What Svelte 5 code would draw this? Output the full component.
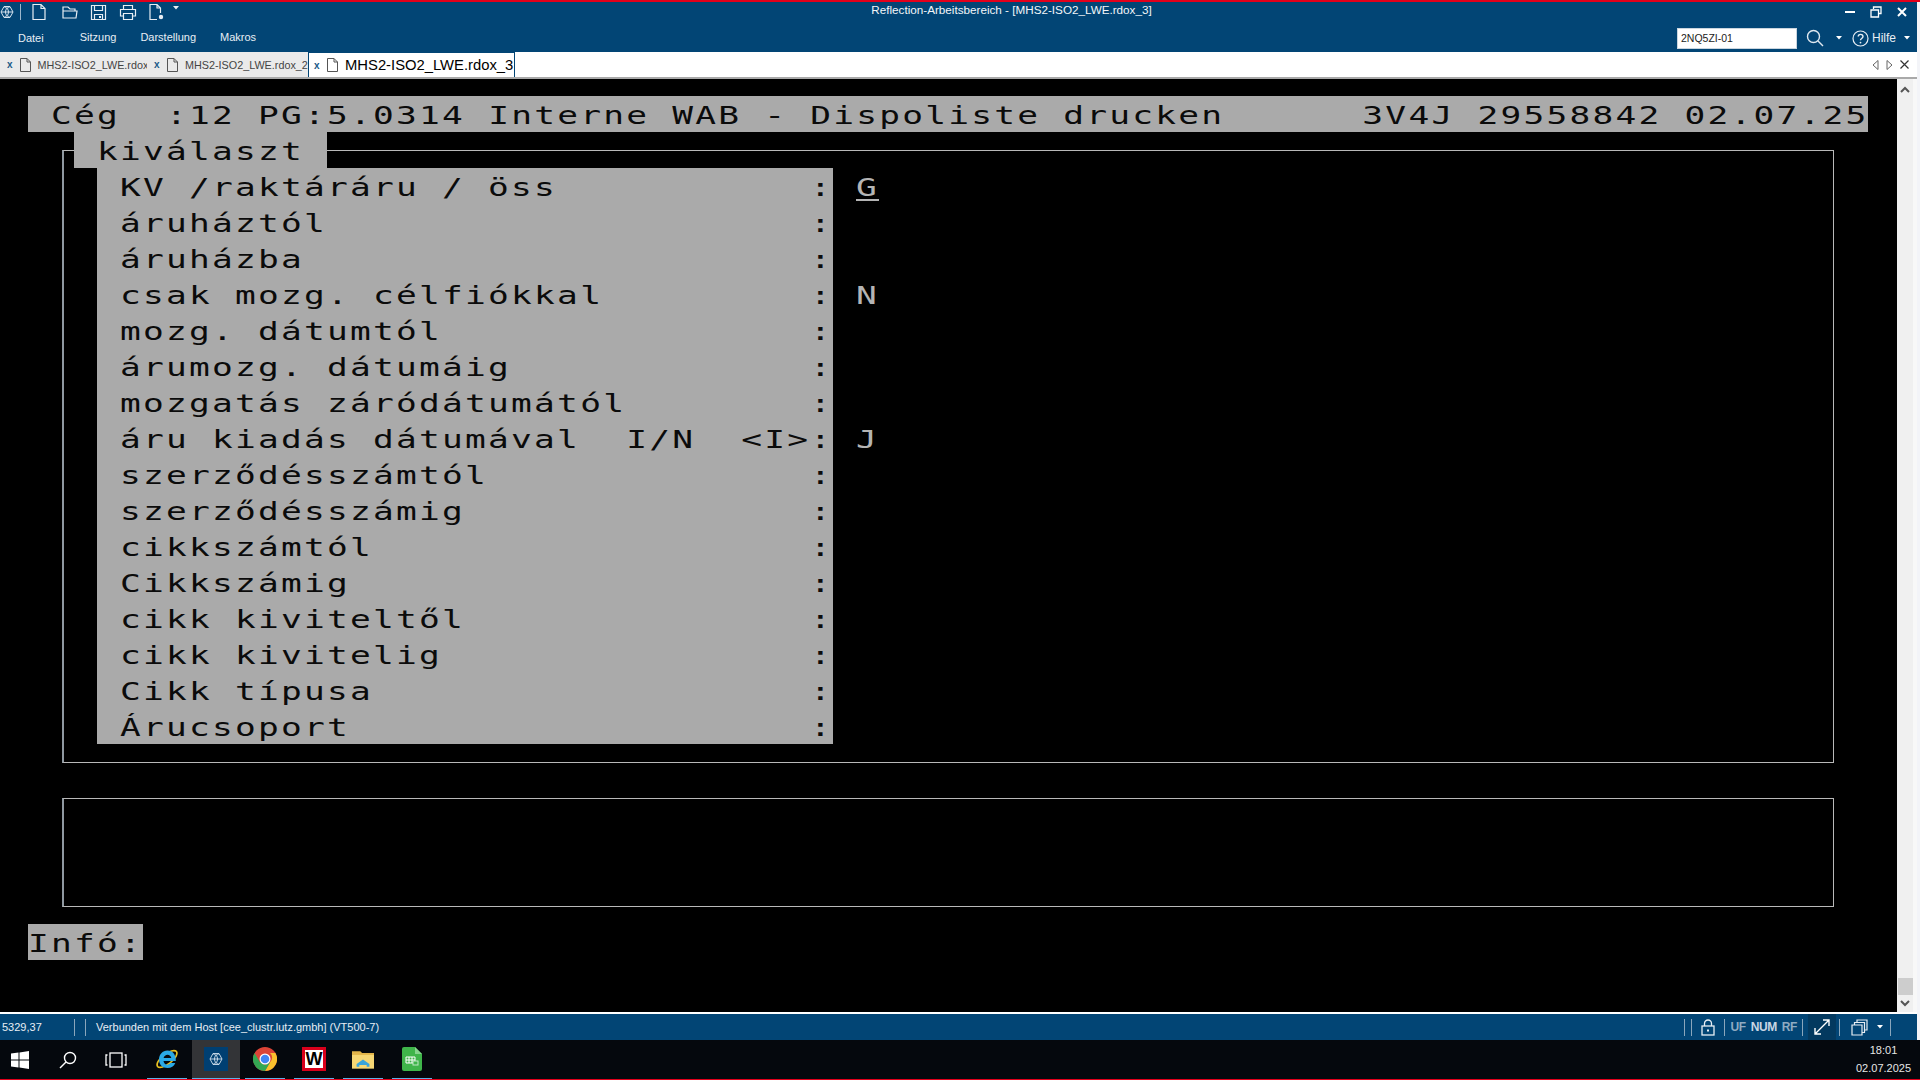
<script>
  const fields = [
    ['KV /raktáráru / öss', 'G'],
    ['áruháztól', ''],
    ['áruházba', ''],
    ['csak mozg. célfiókkal', 'N'],
    ['mozg. dátumtól', ''],
    ['árumozg. dátumáig', ''],
    ['mozgatás záródátumától', ''],
    ['áru kiadás dátumával  I/N  <I>', 'J'],
    ['szerződésszámtól', ''],
    ['szerződésszámig', ''],
    ['cikkszámtól', ''],
    ['Cikkszámig', ''],
    ['cikk kiviteltől', ''],
    ['cikk kivitelig', ''],
    ['Cikk típusa', ''],
    ['Árucsoport', '']
  ];
  const tabs = [
    { name: 'MHS2-ISO2_LWE.rdox', active: false },
    { name: 'MHS2-ISO2_LWE.rdox_2', active: false },
    { name: 'MHS2-ISO2_LWE.rdox_3', active: true }
  ];
  const head = ' Cég  :12 PG:5.0314 Interne WAB - Dispoliste drucken      3V4J 29558842 02.07.25';
</script>

<div class="screen">
  <div class="redline"></div>
  <div class="window">
    <header class="ribbon">
      <div class="titlerow">
        <div class="quick">
          <svg class="logo" width="14" height="14" viewBox="0 0 14 14" fill="none" stroke="#d5e2ee" stroke-width="1"><path d="M4 1.500h6L13 7l-3 5.500H4L1 7zM1 7h12M4 1.500c2 2 4 2 6 0M4 12.500c2-2 4-2 6 0M7 3.200c-2 2-2 5.600 0 7.600M7 3.200c2 2 2 5.600 0 7.600"/></svg>
          <span class="vsep"></span>
          <svg width="16" height="18" viewBox="0 0 16 18" fill="none" stroke="#e8eef4" stroke-width="1.2"><path d="M2 1.500h8l4 4v11H2zM10 1.500v4h4"/></svg>
          <svg width="18" height="16" viewBox="0 0 18 16" fill="none" stroke="#e8eef4" stroke-width="1.2"><path d="M2 14V3h5l2 2h5v2M2 7h14l-1 7H2z"/></svg>
          <svg width="17" height="17" viewBox="0 0 17 17" fill="none" stroke="#e8eef4" stroke-width="1.2"><path d="M1.500 1.500h14v14h-14zM4.500 1.500v5h8v-5M4.500 15.500v-5h8v5"/><rect x="9" y="12" width="2" height="2" fill="#e8eef4" stroke="none"/></svg>
          <svg width="18" height="17" viewBox="0 0 18 17" fill="none" stroke="#e8eef4" stroke-width="1.2"><path d="M4.500 5V1.500h9V5M4.500 12H1.500V5.500h15V12h-3M4.500 9.500h9v6h-9z"/></svg>
          <svg width="18" height="18" viewBox="0 0 18 18" fill="none" stroke="#e8eef4" stroke-width="1.2"><path d="M9 16.500H2v-15h7l3.500 3.500v5M9 1.500V5h3.500"/><circle cx="13" cy="14" r="2.200" fill="#e8eef4" stroke="none"/></svg>
          <svg class="caret" width="6" height="4" viewBox="0 0 6 4"><path d="M0 0h6L3 3.500z" fill="#e8eef4"/></svg>
        </div>
        <div class="title">Reflection-Arbeitsbereich - [MHS2-ISO2_LWE.rdox_3]</div>
        <div class="winctl">
          <svg width="10" height="3" viewBox="0 0 10 3"><rect width="10" height="2" fill="#fff"/></svg>
          <svg width="12" height="12" viewBox="0 0 12 12" fill="none" stroke="#fff" stroke-width="1.3"><path d="M3.500 3V1h7.500v6.500H8.500M1 4h7.500v7H1z"/></svg>
          <svg width="10" height="10" viewBox="0 0 10 10" stroke="#fff" stroke-width="2"><path d="M1 1l8 8M9 1l-8 8"/></svg>
        </div>
      </div>
      <div class="menurow">
        <nav class="menu">
          <span class="file">Datei</span>
          <span>Sitzung</span>
          <span>Darstellung</span>
          <span>Makros</span>
        </nav>
        <div class="tools">
          <div class="search">2NQ5ZI-01</div>
          <svg class="magn" width="18" height="18" viewBox="0 0 18 18" fill="none" stroke="#dfe8f0" stroke-width="1.4"><circle cx="7.500" cy="7.500" r="6"/><path d="M12 12l5 5"/></svg>
          <svg class="caret1" width="6" height="4" viewBox="0 0 6 4"><path d="M0 0h6L3 3.500z" fill="#fff"/></svg>
          <svg class="help" width="17" height="17" viewBox="0 0 17 17" fill="none" stroke="#e8eef4" stroke-width="1.2"><circle cx="8.500" cy="8.500" r="7.500"/><path d="M6.200 6.600c0-3 4.800-3 4.800 0 0 1.900-2.500 1.800-2.500 3.600" stroke-width="1.400"/><circle cx="8.500" cy="12.600" r="0.900" fill="#e8eef4" stroke="none"/></svg>
          <span class="hilfe">Hilfe</span>
          <svg class="caret2" width="6" height="4" viewBox="0 0 6 4"><path d="M0 0h6L3 3.500z" fill="#fff"/></svg>
        </div>
      </div>
    </header>

    <div class="tabstrip">
      {#each tabs as t}
        <div class="tab" class:active={t.active}>
          <span class="x">x</span>
          <svg width="13" height="16" viewBox="0 0 13 16" fill="none" stroke="#555" stroke-width="1"><path d="M1.500 1.500h6.500l3.500 3.500v9.500h-10zM8 1.500V5h3.500"/></svg>
          <span class="tname">{t.name}</span>
        </div>
      {/each}
      <div class="tabnav">
        <svg width="7" height="10" viewBox="0 0 7 10" fill="none" stroke="#666"><path d="M6 .5v9L1 5z"/></svg>
        <svg width="7" height="10" viewBox="0 0 7 10" fill="none" stroke="#666"><path d="M1 .5v9L6 5z"/></svg>
        <svg width="9" height="9" viewBox="0 0 9 9" stroke="#333" stroke-width="1.200"><path d="M.5.5l8 8M8.500.5l-8 8"/></svg>
      </div>
    </div>

    <main class="workarea">
      <div class="terminal">
        <div class="box box1"></div>
        <div class="box box2"></div>
        <div class="cell headrow"><span class="t">{head}</span></div>
        <div class="cell legend"><span class="t">kiválaszt</span></div>
        <div class="panel">
          {#each fields as f}
            <div class="frow">
              <span class="t lbl">{f[0]}</span>
              <span class="t colon">:</span>
            </div>
          {/each}
        </div>
        <div class="values">
          {#each fields as f}
            <div class="vrow"><span class="t" class:ul={f[1] === 'G'}>{f[1]}</span></div>
          {/each}
        </div>
        <div class="cell info"><span class="t">Infó:</span></div>
      </div>
      <aside class="scroll">
        <svg width="12" height="8" viewBox="0 0 12 8" fill="none" stroke="#555" stroke-width="2"><path d="M2 6l4-4 4 4"/></svg>
        <div class="thumbwrap">
          <div class="thumb"></div>
          <svg width="12" height="8" viewBox="0 0 12 8" fill="none" stroke="#555" stroke-width="2"><path d="M2 2l4 4 4-4"/></svg>
        </div>
      </aside>
    </main>

    <footer class="status">
      <span class="coord">5329,37</span>
      <span class="sbar s1"></span><span class="sbar s2"></span>
      <span class="conn">Verbunden mit dem Host [cee_clustr.lutz.gmbh] (VT500-7)</span>
      <div class="sright">
        <span class="sbar"></span><span class="sbar"></span>
        <svg class="lock" width="14" height="17" viewBox="0 0 14 17" fill="none" stroke="#e8eef4" stroke-width="1.300"><rect x="1" y="7" width="12" height="9"/><path d="M3.500 7V4.500a3.500 3.500 0 0 1 7 0V7"/><rect x="6" y="10.500" width="2" height="2" fill="#e8eef4" stroke="none"/></svg>
        <span class="sbar"></span>
        <span class="flag dim">UF</span><span class="flag">NUM</span><span class="flag dim">RF</span>
        <span class="sbar"></span>
        <div class="expand"><svg width="18" height="18" viewBox="0 0 18 18" fill="none" stroke="#fff" stroke-width="1.400"><path d="M2 16L16 2M10 2h6v6M2 10v6h6"/></svg></div>
        <span class="sbar"></span>
        <svg class="wins" width="17" height="17" viewBox="0 0 17 17" fill="none" stroke="#e8eef4" stroke-width="1.200"><path d="M1 6h10v10H1zM3.500 6V3.500h10v10H11M6 3.500V1h10v10h-2.500"/></svg>
        <svg class="sc" width="6" height="4" viewBox="0 0 6 4"><path d="M0 0h6L3 3.500z" fill="#fff"/></svg>
        <span class="sbar last"></span>
      </div>
    </footer>
  </div>

  <div class="taskbar">
    <div class="apps">
      <div class="slot plain w48"><svg width="18" height="18" viewBox="0 0 18 18" fill="#fff"><path d="M0 2.500L7.500 1.500V8.500H0zM8.500 1.400L18 0V8.500H8.500zM0 9.500H7.500V16.500L0 15.500zM8.500 9.500H18V18L8.500 16.600z"/></svg></div>
      <div class="slot plain w48"><svg width="18" height="18" viewBox="0 0 18 18" fill="none" stroke="#fff" stroke-width="1.400"><circle cx="11" cy="7" r="5.500"/><path d="M7 11l-6 6"/></svg></div>
      <div class="slot plain w48"><svg width="22" height="16" viewBox="0 0 22 16" fill="none" stroke="#fff" stroke-width="1.300"><rect x="5" y="1" width="12" height="14"/><path d="M2.500 3H1v10h1.500M19.500 3H21v10h-1.500"/></svg></div>
      <div class="slot on ie"><svg width="24" height="24" viewBox="0 0 24 24"><ellipse cx="12" cy="12" rx="12" ry="5" transform="rotate(-38 12 12)" fill="none" stroke="#e8c020" stroke-width="1.600"/><path d="M12.500 3.500C7.500 3.500 4 7.500 4 12.500S7.500 21 12.500 21c3.700 0 6.500-1.800 7.800-5h-5c-.6 1.100-1.700 1.700-2.900 1.700-2 0-3.600-1.400-3.900-3.700h12.300c.2-6.500-3.300-10.500-8.300-10.500zM8.600 11c.4-2 2-3.300 3.900-3.300S16 9 16.300 11z" fill="#2aa9e6"/></svg></div>
      <div class="slot on act"><span class="square"><svg width="16" height="14" viewBox="0 0 14 14" fill="none" stroke="#d5e2ee" stroke-width="0.900"><path d="M4 1.500h6L13 7l-3 5.500H4L1 7zM1 7h12M4 1.500c2 2 4 2 6 0M4 12.500c2-2 4-2 6 0M7 3.200c-2 2-2 5.600 0 7.600M7 3.200c2 2 2 5.600 0 7.600"/></svg></span></div>
      <div class="slot on"><svg width="24" height="24" viewBox="0 0 24 24"><circle cx="12" cy="12" r="12" fill="#db4437"/><path d="M12 6h10.400A12 12 0 0 1 12 24l5.200-9a6 6 0 0 0-.2-9z" fill="#fbc02d"/><path d="M1.600 6A12 12 0 0 0 12 24l5.200-9-5.200 3-5.200-3z" fill="#34a853"/><circle cx="12" cy="12" r="5.500" fill="#fff"/><circle cx="12" cy="12" r="4.300" fill="#4285f4"/></svg></div>
      <div class="slot on"><span class="wps">W</span></div>
      <div class="slot on"><svg width="22" height="19" viewBox="0 0 24 20"><path d="M0 1h9l2 2h13v4H0z" fill="#e3b54a"/><path d="M0 5h24v15H0z" fill="#f7d774"/><path d="M5 18v-3l7-5 7 5v3h-3v-2H8v2z" fill="#3aa5dc"/></svg></div>
      <div class="slot on"><svg width="20" height="24" viewBox="0 0 20 24"><path d="M2 0h11l7 7v15a2 2 0 0 1-2 2H2a2 2 0 0 1-2-2V2a2 2 0 0 1 2-2z" fill="#3fb54a"/><path d="M13 0l7 7h-7z" fill="#86d48d"/><path d="M4 10h9v6H4zM4 13h9M7 10v6M10 10v6" fill="none" stroke="#fff"/><rect x="11" y="14" width="5" height="4" fill="#3fb54a" stroke="#bfe8c3"/></svg></div>
    </div>
    <div class="clock"><span>18:01</span><span>02.07.2025</span></div>
  </div>
</div>

<style>
  :global(body) { margin: 0; background: #000; overflow: hidden; }
  .screen { width: 1920px; height: 1080px; display: flex; flex-direction: column; font-family: "Liberation Sans", Arial, sans-serif; overflow: hidden; }
  svg { display: block; flex: none; }
  .redline { height: 2px; flex: none; background: #e3001b; }
  .window { flex: none; height: 1038px; display: flex; flex-direction: column; border-right: 3px solid #f3f4f8; }

  .ribbon { height: 50px; flex: none; background: #024575; color: #e8eef4; font-size: 11px; }
  .titlerow { height: 20px; display: flex; align-items: center; position: relative; }
  .quick { display: flex; align-items: center; }
  .logo { margin-right: 6px; }
  .vsep { width: 1px; height: 16px; background: #9db7cc; margin-right: 10px; }
  .quick svg:nth-of-type(2) { margin-right: 14px; }
  .quick svg:nth-of-type(3) { margin-right: 11px; }
  .quick svg:nth-of-type(4) { margin-right: 12px; }
  .quick svg:nth-of-type(5) { margin-right: 11px; }
  .quick svg:nth-of-type(6) { margin-right: 7px; }
  .caret { margin-top: -9px; }
  .title { position: absolute; left: 0; text-align: center; font-size: 11.7px; color: #f2f5f8; padding-left: 106px; box-sizing: border-box; width: 1917px; top: 1px; }
  .winctl { margin-left: auto; display: flex; align-items: center; gap: 15px; padding-right: 10px; position: relative; }
  .menurow { height: 30px; display: flex; align-items: center; }
  .menu { display: flex; gap: 24px; padding-left: 18px; }
  .menu span { display: block; }
  .menu .file { margin-right: 12px; position: relative; top: 1px; }
  .tools { margin-left: auto; display: flex; align-items: center; }
  .search { width: 120px; height: 21px; margin-top: 2px; background: #fff; color: #222; font-size: 10.5px; line-height: 18px; padding-left: 3px; box-sizing: border-box; border: 1px solid #c9d5df; }
  .magn { margin-left: 9px; margin-top: 2px; }
  .caret1 { margin-left: 12px; margin-top: 2px; }
  .help { margin-left: 10px; margin-top: 2px; }
  .hilfe { margin-left: 3px; font-size: 12px; margin-top: 2px; }
  .caret2 { margin-left: 8px; margin-right: 7px; margin-top: 2px; }

  .tabstrip { height: 27px; flex: none; display: flex; background: #fff; border-bottom: 2px solid #a9a9a9; box-sizing: border-box; font-size: 10.8px; color: #444; white-space: nowrap; }
  .tab { display: flex; align-items: center; background: #eaeaea; padding-left: 7px; gap: 6px; height: 25px; }
  .tab:nth-of-type(1) { width: 147px; box-sizing: border-box; }
  .tab:nth-of-type(2) { width: 161px; box-sizing: border-box; }
  .tab.active { width: 207px; box-sizing: border-box; background: #fff; border: 1px solid #024575; border-bottom: 0; color: #000; font-size: 14.8px; padding-left: 5px; }
  .x { color: #1d5a88; font-weight: bold; font-size: 10px; width: 6px; }
  .tabnav { margin-left: auto; display: flex; align-items: center; gap: 7px; padding-right: 8px; }

  .workarea { height: 933px; flex: none; display: flex; background: #000; }
  .terminal {
    width: 1897px; flex: none; box-sizing: border-box; padding: 17px 0 0 28px;
    display: grid; grid-template-columns: repeat(80, 23px); grid-template-rows: repeat(25, 36px);
    font-family: "DejaVu Sans Mono", monospace; font-size: 25px; line-height: 40px; color: #b4b4b4;
  }
  .t { display: inline-block; white-space: pre; transform: scaleX(1.38); transform-origin: 0 50%; letter-spacing: 1.62px; }
  .cell, .panel { background: #aaa; color: #0b0b0b; }
  .headrow { grid-column: 1 / 81; grid-row: 1; }
  .legend { grid-column: 3 / 14; grid-row: 2; z-index: 1; padding-left: 23px; }
  .panel { grid-column: 4 / 36; grid-row: 3 / 19; z-index: 1; }
  .frow { height: 36px; display: flex; justify-content: space-between; padding-left: 23px; }
  .lbl { width: 1px; }
  .colon { width: 23px; }
  .values { grid-column: 37 / 40; grid-row: 3 / 19; z-index: 1; }
  .vrow { height: 36px; }
  .ul { text-decoration: underline; text-underline-offset: 3px; }
  .info { grid-column: 1 / 6; grid-row: 24; }
  .box { border: 1px solid #b9b9b9; border-left: 2px solid #8f98a0; }
  .box1 { grid-column: 2 / 80; grid-row: 2 / 20; margin: 18px 11px 17px 11px; }
  .box2 { grid-column: 2 / 80; grid-row: 20 / 24; margin: 18px 11px 17px 11px; }

  .scroll { flex: 1; background: #f0f0f0; border-right: 4px solid #f8f8f8; display: flex; flex-direction: column; align-items: center; padding-top: 7px; box-sizing: border-box; justify-content: space-between; }
  .thumbwrap { display: flex; flex-direction: column; align-items: center; gap: 4px; padding-bottom: 5px; }
  .thumb { width: 15px; height: 17px; background: #cdcdcd; }

  .status { height: 28px; flex: none; display: flex; align-items: center; background: #024575; border-top: 2px solid #fff; box-sizing: border-box; color: #e8eef4; font-size: 11px; }
  .coord { margin-left: 2px; width: 72px; }
  .sbar { display: block; flex: none; width: 1px; height: 17px; background: #8aa6bc; }
  .s2 { margin-left: 10px; }
  .conn { margin-left: 10px; }
  .sright { margin-left: auto; display: flex; align-items: center; padding-right: 26px; }
  .sright > .sbar:nth-child(2) { margin-left: 6px; }
  .lock { margin: 0 9px; }
  .flag { font-weight: bold; margin-left: 5px; font-size: 12px; letter-spacing: -0.4px; color: #c9d6e4; }
  .flag.dim { color: #8fabc2; }
  .flag + .sbar { margin-left: 5px; }
  .expand { width: 28px; height: 26px; margin: 0 3px 0 5px; background: #03395f; display: flex; align-items: center; justify-content: center; }
  .wins { margin-left: 11px; }
  .sc { margin-left: 9px; }
  .last { margin-left: 7px; }

  .taskbar { height: 40px; flex: none; display: flex; align-items: stretch; background: #05080d; border-bottom: 1px solid #e3001b; box-sizing: border-box; color: #e6e6e6; }
  .apps { display: flex; }
  .slot { width: 40px; margin-left: 5px; margin-right: 4px; display: flex; align-items: center; justify-content: center; border-bottom: 1px solid #5fb0e8; box-sizing: border-box; }
  .slot.plain { border-bottom: 0; margin: 0; }
  .slot.w48 { width: 48px; }
  .slot.w48:nth-child(1) { margin-left: -4px; }
  .ie { margin-left: 7px; }
  .act { width: 48px; background: #333437; margin-left: 1px; margin-right: 0; }
  .square { width: 24px; height: 24px; background: #003f72; display: flex; align-items: center; justify-content: center; }
  .wps { width: 24px; height: 24px; box-sizing: border-box; background: #fff; border: 3px solid #d9001b; color: #000; font-weight: bold; font-size: 18px; line-height: 18px; text-align: center; }
  .clock { margin-left: auto; margin-right: 9px; width: 55px; display: flex; flex-direction: column; align-items: center; justify-content: center; gap: 5px; font-size: 11px; line-height: 13px; }
</style>
